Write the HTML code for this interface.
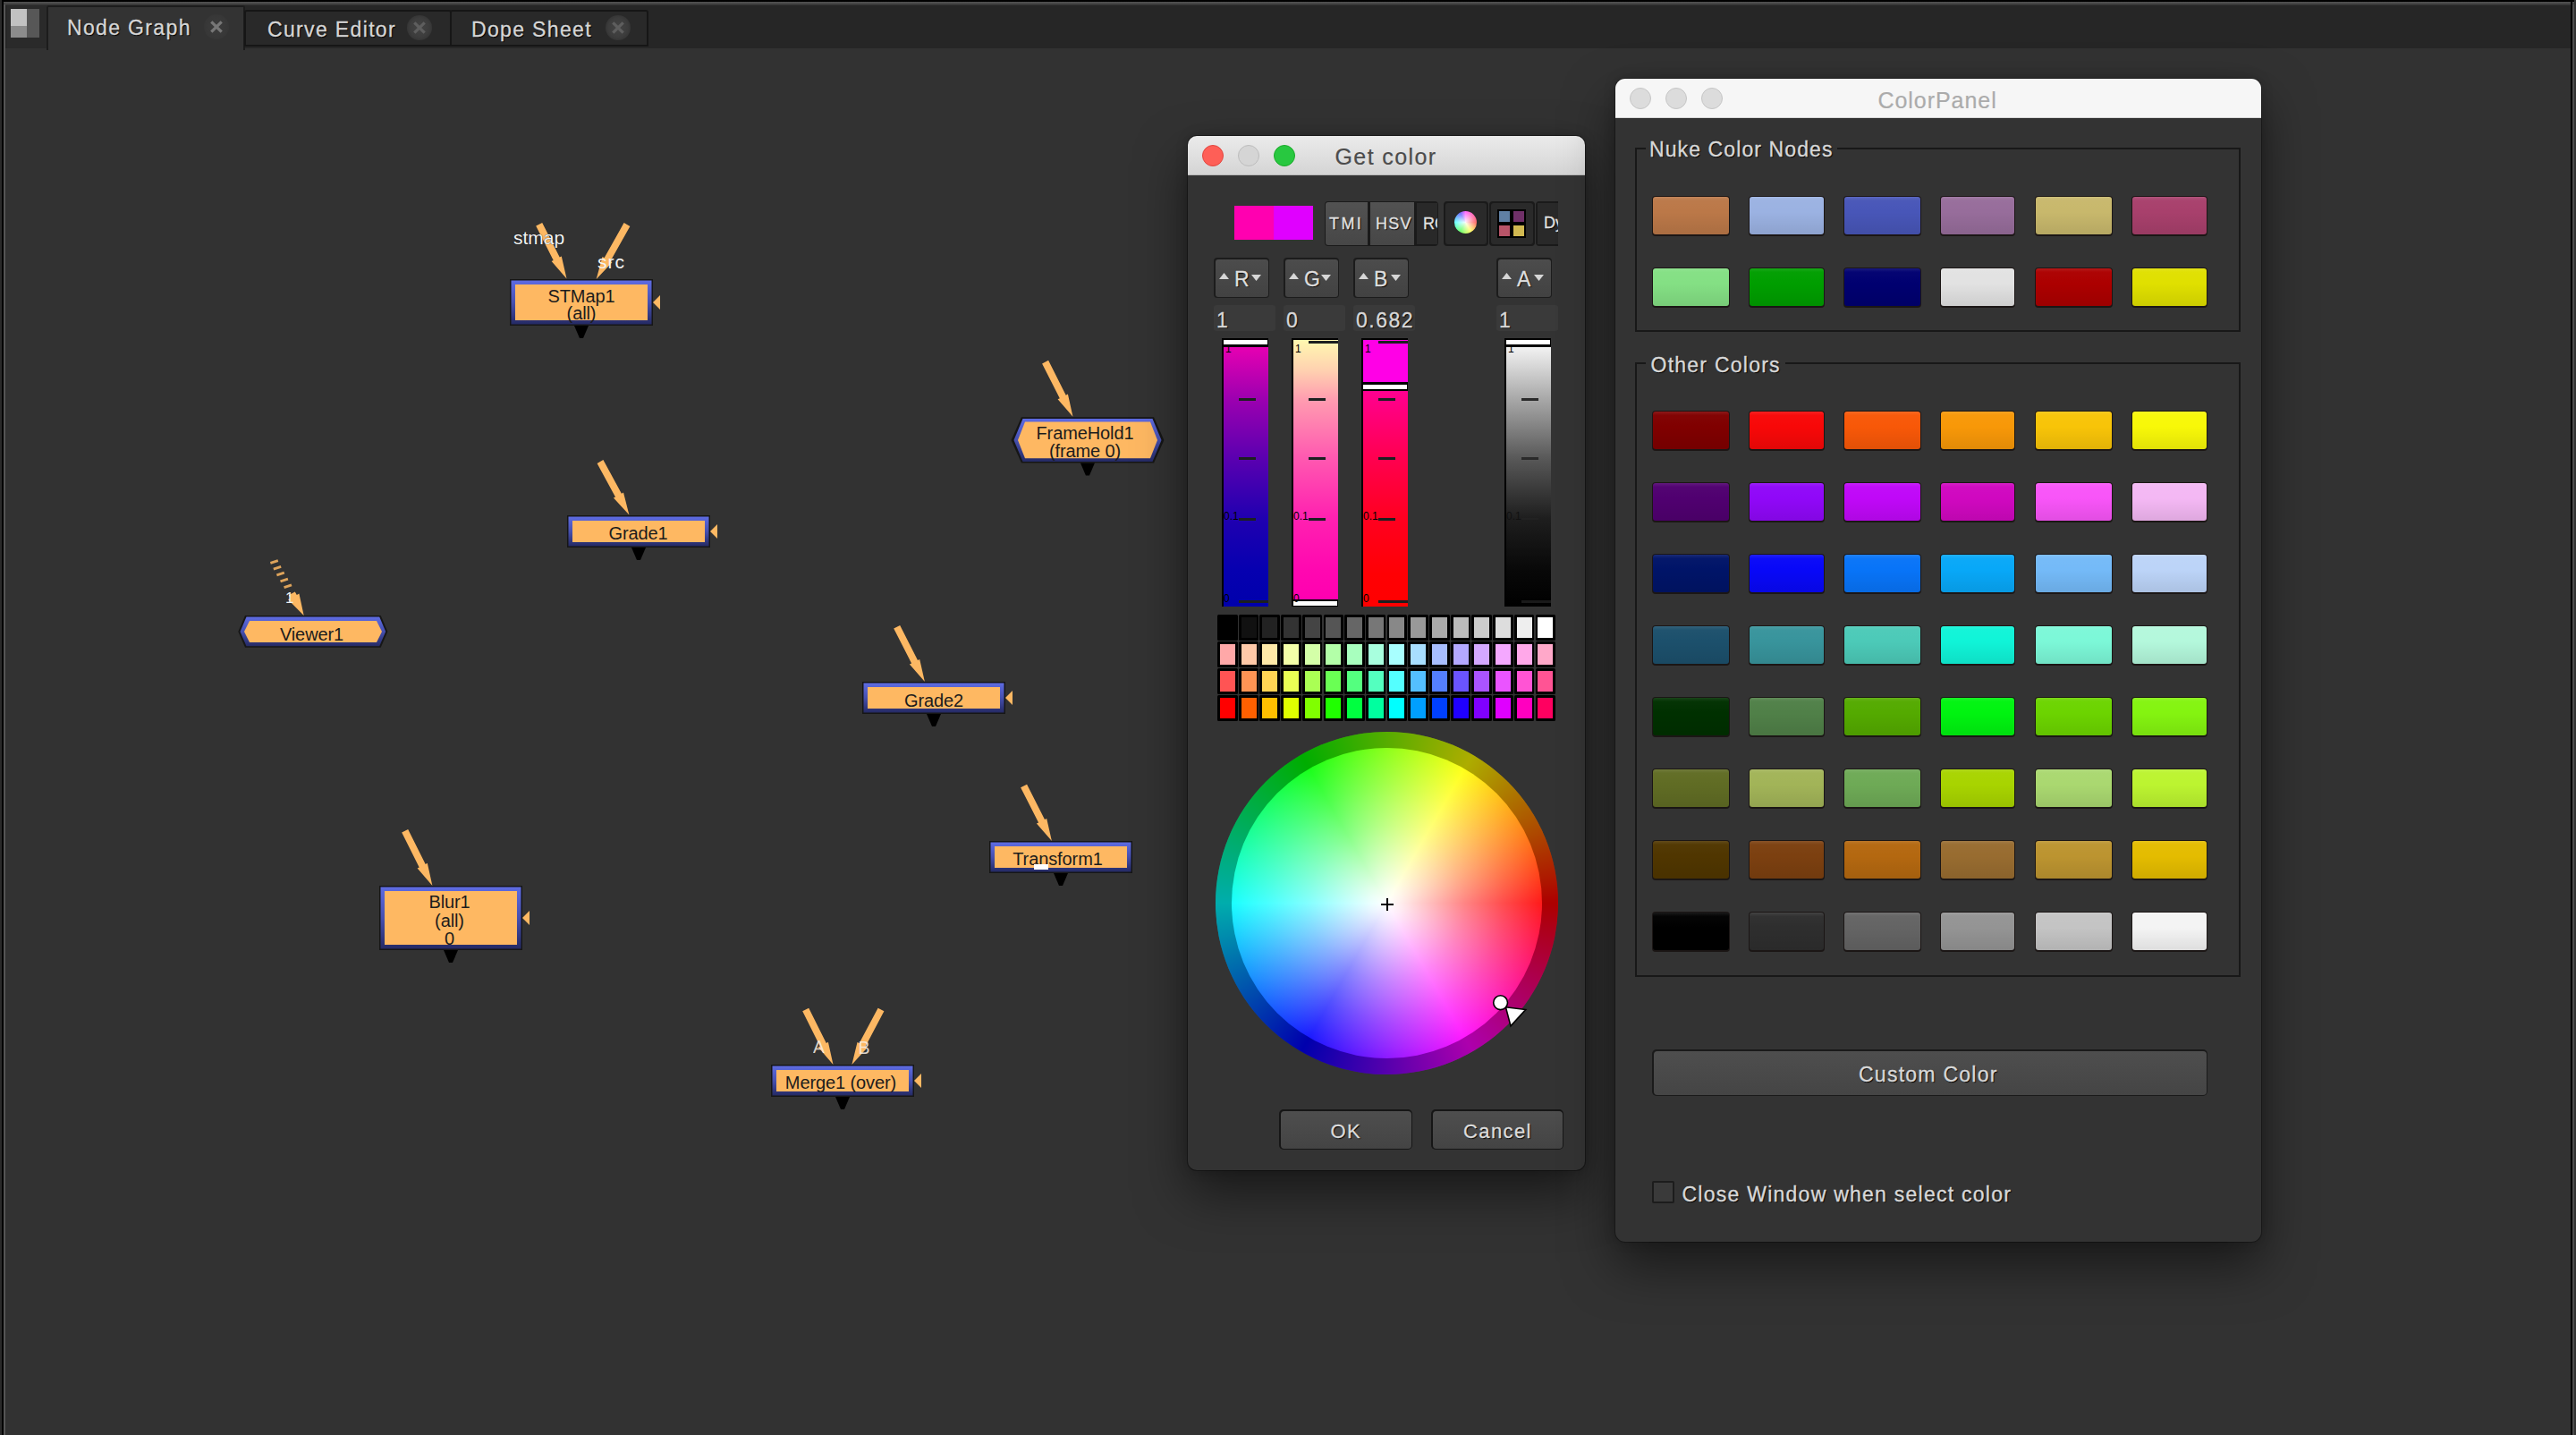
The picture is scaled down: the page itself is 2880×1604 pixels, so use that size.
<!DOCTYPE html>
<html><head><meta charset="utf-8">
<style>
html,body{margin:0;padding:0;}
body{width:2880px;height:1604px;position:relative;overflow:hidden;background:#323232;font-family:"Liberation Sans",sans-serif;}
.a{position:absolute;}
.tabtxt{position:absolute;color:#d6d6d6;font-size:23px;letter-spacing:1.35px;-webkit-text-stroke:0.3px #d6d6d6;text-shadow:1px 1px 1px #000;white-space:nowrap;}
.xbtn{position:absolute;width:28px;height:28px;border-radius:14px;background:radial-gradient(circle,#444 0%,#3c3c3c 55%,rgba(50,50,50,0) 100%);}
.xbtn svg{position:absolute;left:0;top:0;}
</style></head><body>
<!-- frame -->
<div class="a" style="left:0;top:0;width:2880px;height:2px;background:#000"></div>
<div class="a" style="left:0;top:2px;width:2880px;height:3px;background:linear-gradient(#545454,#3e3e3e)"></div>
<div class="a" style="left:0;top:5px;width:2880px;height:1px;background:#333"></div>
<div class="a" style="left:0;top:6px;width:2880px;height:48px;background:#262626"></div>
<div class="a" style="left:0;top:0;width:2px;height:1604px;background:#2a2a2a"></div>
<div class="a" style="left:2px;top:0;width:2px;height:1604px;background:#000"></div>
<div class="a" style="left:4px;top:5px;width:2px;height:1599px;background:#555"></div>
<div class="a" style="left:2874px;top:0;width:2px;height:1604px;background:#000"></div>
<div class="a" style="left:2876px;top:5px;width:2px;height:1599px;background:#4e4e4e"></div>
<div class="a" style="left:2878px;top:0;width:2px;height:1604px;background:#333"></div>

<!-- tab bar -->
<div class="a" style="left:8px;top:6px;width:45px;height:48px;background:#2a2a2a"></div>
<div class="a" style="left:12px;top:10px;width:18px;height:19px;background:#c2c2c2"></div>
<div class="a" style="left:12px;top:29px;width:18px;height:13px;background:#8c8c8c"></div>
<div class="a" style="left:30px;top:10px;width:14px;height:32px;background:#575757"></div>

<!-- Node Graph tab (active) -->
<div class="a" style="left:52px;top:6px;width:222px;height:50px;background:#333;border-left:2px solid #1c1c1c;border-top:2px solid #1c1c1c;border-right:2px solid #1c1c1c;border-radius:3px 3px 0 0;box-sizing:border-box"></div>
<div class="a" style="left:54px;top:8px;width:218px;height:48px;background:#333"></div>
<div class="tabtxt" style="left:75px;top:18px;">Node Graph</div>
<div class="xbtn" style="left:228px;top:16px;background:radial-gradient(circle,#3c3c3c 0%,#383838 55%,rgba(51,51,51,0) 100%);"><svg width="28" height="28"><path d="M8.3 8.3 L19.7 19.7 M19.7 8.3 L8.3 19.7" stroke="#777" stroke-width="3.2"/></svg></div>

<!-- Curve Editor tab -->
<div class="a" style="left:273px;top:11px;width:232px;height:41px;background:#292929;border:2px solid #161616;box-sizing:border-box;border-radius:3px 3px 0 0"></div>
<div class="tabtxt" style="left:299px;top:20px;">Curve Editor</div>
<div class="xbtn" style="left:455px;top:17px;"><svg width="28" height="28"><path d="M8.3 8.3 L19.7 19.7 M19.7 8.3 L8.3 19.7" stroke="#5e5e5e" stroke-width="3.2"/></svg></div>
<!-- Dope Sheet tab -->
<div class="a" style="left:503px;top:11px;width:222px;height:41px;background:#292929;border:2px solid #161616;box-sizing:border-box;border-radius:3px 3px 0 0"></div>
<div class="tabtxt" style="left:527px;top:20px;">Dope Sheet</div>
<div class="xbtn" style="left:677px;top:17px;"><svg width="28" height="28"><path d="M8.3 8.3 L19.7 19.7 M19.7 8.3 L8.3 19.7" stroke="#5e5e5e" stroke-width="3.2"/></svg></div>

<!--NODEGRAPH-->
<svg class="a" style="left:0;top:0" width="2880" height="1604" viewBox="0 0 2880 1604" font-family="Liberation Sans, sans-serif">
<defs><linearGradient id="nb" x1="0" y1="0" x2="0" y2="1"><stop offset="0" stop-color="#5e6be2"/><stop offset="0.5" stop-color="#4650b0"/><stop offset="1" stop-color="#252a64"/></linearGradient></defs>
<polygon points="599.2,252.5 618.7,291.1 616.6,292.1 633.5,311.6 627.8,286.4 625.7,287.5 606.2,248.9" fill="#fdb863"/>
<polygon points="697.6,249.1 675.6,288.3 673.5,287.1 666.7,312.0 684.4,293.3 682.4,292.1 704.4,252.9" fill="#fdb863"/>
<polygon points="1165.1,406.4 1184.8,445.2 1182.6,446.3 1199.5,465.8 1193.9,440.6 1191.7,441.7 1172.1,402.8" fill="#fdb863"/>
<polygon points="667.6,517.9 688.0,555.5 685.9,556.6 703.4,575.6 697.0,550.6 694.9,551.8 674.4,514.1" fill="#fdb863"/>
<polygon points="999.2,702.5 1019.1,741.5 1016.9,742.6 1033.9,762.0 1028.2,736.9 1026.0,738.0 1006.2,698.9" fill="#fdb863"/>
<polygon points="1141.1,880.3 1161.1,919.5 1158.9,920.6 1175.9,940.0 1170.2,914.9 1168.0,916.0 1148.1,876.7" fill="#fdb863"/>
<polygon points="449.2,930.5 468.7,969.4 466.6,970.5 483.4,990.0 477.8,964.8 475.7,965.9 456.2,927.1" fill="#fdb863"/>
<polygon points="897.2,1130.2 916.8,1169.4 914.7,1170.5 931.5,1190.0 925.9,1164.8 923.8,1165.9 904.2,1126.8" fill="#fdb863"/>
<polygon points="981.6,1126.7 960.7,1166.1 958.5,1165.0 952.4,1190.0 969.7,1170.9 967.6,1169.7 988.4,1130.3" fill="#fdb863"/>
<line x1="302.4" y1="629.4" x2="310.8" y2="626.6" stroke="#fdb863" stroke-width="2.8" opacity="0.85"/>
<line x1="305.8" y1="636.1" x2="314.2" y2="633.3" stroke="#fdb863" stroke-width="2.8" opacity="0.85"/>
<line x1="309.4" y1="642.9" x2="317.8" y2="640.1" stroke="#fdb863" stroke-width="2.8" opacity="0.85"/>
<line x1="313.5" y1="649.9" x2="321.9" y2="647.1" stroke="#fdb863" stroke-width="2.8" opacity="0.85"/>
<line x1="317.6" y1="656.7" x2="326.0" y2="653.9" stroke="#fdb863" stroke-width="2.8" opacity="0.85"/>
<polygon points="322.8,665.3 324.7,668.8 322.1,670.3 339.7,688.0 334.4,663.6 331.8,665.0 329.8,661.5" fill="#fdb863"/>
<rect x="570" y="312" width="160" height="52" fill="#161616"/>
<rect x="571.5" y="313.5" width="157" height="49" fill="url(#nb)"/>
<rect x="576" y="318" width="148" height="40" fill="#feb862"/>
<text x="650" y="338" font-size="20" letter-spacing="-0.1" text-anchor="middle" fill="#1c1c1c">STMap1</text>
<text x="650" y="357" font-size="20" letter-spacing="-0.1" text-anchor="middle" fill="#1c1c1c">(all)</text>
<polygon points="642.0,364 658.0,364 652.0,378 648.0,378" fill="#000"/>
<polygon points="730,338.0 738,330.0 738,346.0" fill="#fdb863"/>
<rect x="634" y="576" width="160" height="36" fill="#161616"/>
<rect x="635.5" y="577.5" width="157" height="33" fill="url(#nb)"/>
<rect x="640" y="582" width="148" height="24" fill="#feb862"/>
<text x="713.5" y="603.4" font-size="20" letter-spacing="-0.1" text-anchor="middle" fill="#1c1c1c">Grade1</text>
<polygon points="706.0,612 722.0,612 716.0,626 712.0,626" fill="#000"/>
<polygon points="794,594.0 802,586.0 802,602.0" fill="#fdb863"/>
<rect x="964" y="762" width="160" height="36" fill="#161616"/>
<rect x="965.5" y="763.5" width="157" height="33" fill="url(#nb)"/>
<rect x="970" y="768" width="148" height="24" fill="#feb862"/>
<text x="1044" y="789.5" font-size="20" letter-spacing="-0.1" text-anchor="middle" fill="#1c1c1c">Grade2</text>
<polygon points="1036.0,798 1052.0,798 1046.0,812 1042.0,812" fill="#000"/>
<polygon points="1124,780.0 1132,772.0 1132,788.0" fill="#fdb863"/>
<rect x="1106" y="940" width="160" height="36" fill="#161616"/>
<rect x="1107.5" y="941.5" width="157" height="33" fill="url(#nb)"/>
<rect x="1112" y="946" width="148" height="24" fill="#feb862"/>
<text x="1182.5" y="967.3" font-size="20" letter-spacing="-0.1" text-anchor="middle" fill="#1c1c1c">Transform1</text>
<polygon points="1178.0,976 1194.0,976 1188.0,990 1184.0,990" fill="#000"/>
<rect x="424" y="990" width="160" height="72" fill="#161616"/>
<rect x="425.5" y="991.5" width="157" height="69" fill="url(#nb)"/>
<rect x="430" y="996" width="148" height="60" fill="#feb862"/>
<text x="502.5" y="1015.4" font-size="20" letter-spacing="-0.1" text-anchor="middle" fill="#1c1c1c">Blur1</text>
<text x="502.5" y="1035.5" font-size="20" letter-spacing="-0.1" text-anchor="middle" fill="#1c1c1c">(all)</text>
<text x="502.5" y="1055.5" font-size="20" letter-spacing="-0.1" text-anchor="middle" fill="#1c1c1c">0</text>
<polygon points="496.0,1062 512.0,1062 506.0,1076 502.0,1076" fill="#000"/>
<polygon points="584,1026.0 592,1018.0 592,1034.0" fill="#fdb863"/>
<rect x="862" y="1190" width="160" height="36" fill="#161616"/>
<rect x="863.5" y="1191.5" width="157" height="33" fill="url(#nb)"/>
<rect x="868" y="1196" width="148" height="24" fill="#feb862"/>
<text x="940" y="1217.3" font-size="20" letter-spacing="-0.1" text-anchor="middle" fill="#1c1c1c">Merge1 (over)</text>
<polygon points="934.0,1226 950.0,1226 944.0,1240 940.0,1240" fill="#000"/>
<polygon points="1022,1208.0 1030,1200.0 1030,1216.0" fill="#fdb863"/>
<polygon points="1130.5,492 1142,466.3 1290,466.3 1301.4,492 1290,517.5 1142,517.5" fill="#161616"/>
<polygon points="1133.5,492 1143.5,468 1288.5,468 1298.5,492 1288.5,516 1143.5,516" fill="url(#nb)"/>
<polygon points="1138,492 1146,471.5 1286,471.5 1294,492 1286,512.3 1146,512.3" fill="#feb862"/>
<text x="1213" y="491.4" font-size="20" letter-spacing="-0.1" text-anchor="middle" fill="#1c1c1c">FrameHold1</text>
<text x="1213" y="511.2" font-size="20" letter-spacing="-0.1" text-anchor="middle" fill="#1c1c1c">(frame 0)</text>
<polygon points="1207.95,517.5 1223.95,517.5 1217.95,531.5 1213.95,531.5" fill="#000"/>
<polygon points="266.3,706 274,688 425.7,688 433.4,706 425.7,723.7 274,723.7" fill="#161616"/>
<polygon points="268.5,706 275.5,689.5 424.2,689.5 431.2,706 424.2,722.2 275.5,722.2" fill="url(#nb)"/>
<polygon points="273,706 279,694 421,694 427,706 421,718 279,718" fill="#feb862"/>
<text x="348.5" y="715.5" font-size="20" letter-spacing="-0.1" text-anchor="middle" fill="#1c1c1c">Viewer1</text>
<rect x="1156" y="966" width="16" height="6" fill="#fff"/>
<text x="574" y="273.3" font-size="21" fill="#f4f4f4" style="text-shadow:0 0 1px #000">stmap</text>
<text x="668" y="299.7" font-size="21" fill="#f4f4f4" letter-spacing="1">src</text>
<text x="909" y="1176.5" font-size="19.5" fill="#f8eee4" opacity="0.85">A</text>
<text x="959.5" y="1178" font-size="19.5" fill="#f8eee4" opacity="0.85">B</text>
<text x="319" y="674" font-size="17" fill="#f0f0f0">1</text>
</svg>
<!--/NODEGRAPH-->

<!--GETCOLOR-->
<div class="a" style="left:1328px;top:152px;width:444px;height:1156px;border-radius:10px;box-shadow:0 0 0 1px rgba(0,0,0,0.35),0 26px 56px rgba(0,0,0,0.5),0 0 14px rgba(0,0,0,0.2);background:#333;"></div>
<div class="a" style="left:1328px;top:152px;width:444px;height:44px;border-radius:10px 10px 0 0;background:linear-gradient(#ebebeb,#d4d4d4);box-shadow:inset 0 -1px 0 #b8b8b8;"></div>
<div class="a" style="left:1344px;top:162px;width:22px;height:22px;border-radius:50%;background:#fe5f57;border:1px solid #e2463f;"></div>
<div class="a" style="left:1384px;top:162px;width:22px;height:22px;border-radius:50%;background:#d5d5d5;border:1px solid #bdbdbd;"></div>
<div class="a" style="left:1424px;top:162px;width:22px;height:22px;border-radius:50%;background:#28c840;border:1px solid #1aab29;"></div>
<div class="a" style="left:1492.5px;top:161px;font-size:25px;color:#4c4c4c;letter-spacing:1.4px;white-space:nowrap;-webkit-text-stroke:0.2px #4c4c4c">Get color</div>
<div class="a" style="left:1380px;top:230px;width:44px;height:38px;background:#ff00b0"></div>
<div class="a" style="left:1424px;top:230px;width:44px;height:38px;background:#e000ff"></div>
<div class="a" style="left:1481px;top:225px;width:127px;height:50px;background:#1a1a1a;border-radius:4px"></div>
<div class="a" style="left:1482px;top:226px;width:47px;height:48px;background:linear-gradient(#525252,#474747);border-radius:3px 0 0 3px"></div>
<div class="a" style="left:1532px;top:226px;width:49px;height:48px;background:linear-gradient(#525252,#474747)"></div>
<div class="a" style="left:1584px;top:227px;width:23px;height:46px;background:#292929;overflow:hidden"><div class="a" style="left:7px;top:13px;color:#e2e2e2;text-shadow:1px 1px 1px #000;font-size:18px;white-space:nowrap;-webkit-text-stroke:0.3px #e2e2e2;">RG</div></div>
<div class="a" style="left:1486px;top:240px;color:#e2e2e2;text-shadow:1px 1px 1px #000;font-size:18px;white-space:nowrap;-webkit-text-stroke:0.3px #e2e2e2;letter-spacing:2.4px">TMI</div>
<div class="a" style="left:1538px;top:240px;color:#e2e2e2;text-shadow:1px 1px 1px #000;font-size:18px;white-space:nowrap;-webkit-text-stroke:0.3px #e2e2e2;letter-spacing:1.3px">HSV</div>
<div class="a" style="left:1614px;top:225px;width:50px;height:50px;background:#1a1a1a;border-radius:4px"></div>
<div class="a" style="left:1616px;top:227px;width:46px;height:46px;background:#2a2a2a;border-radius:3px"></div>
<div class="a" style="left:1626px;top:236px;width:25px;height:25px;border-radius:50%;background:radial-gradient(circle,rgba(255,255,255,0.95) 0%,rgba(255,255,255,0.55) 50%,rgba(255,255,255,0.2) 100%),conic-gradient(from 0deg,#ff00ff,#ff0000 90deg,#ffff00 150deg,#00ff00 210deg,#00ffff 270deg,#0000ff 330deg,#ff00ff)"></div>
<div class="a" style="left:1665px;top:225px;width:51px;height:50px;background:#1a1a1a;border-radius:4px"></div>
<div class="a" style="left:1667px;top:227px;width:47px;height:46px;background:#2a2a2a;border-radius:3px"></div>
<div class="a" style="left:1674px;top:234px;width:32px;height:32px;background:#000"></div>
<div class="a" style="left:1676px;top:236px;width:12px;height:12px;background:#6080a4"></div>
<div class="a" style="left:1692px;top:236px;width:12px;height:12px;background:#703068"></div>
<div class="a" style="left:1676px;top:252px;width:12px;height:12px;background:#b85468"></div>
<div class="a" style="left:1692px;top:252px;width:12px;height:12px;background:#d0b850"></div>
<div class="a" style="left:1717px;top:225px;width:25px;height:50px;background:#1a1a1a;border-radius:4px 0 0 4px"></div>
<div class="a" style="left:1719px;top:227px;width:23px;height:46px;background:#292929;overflow:hidden"><div class="a" style="left:7px;top:12px;color:#e2e2e2;text-shadow:1px 1px 1px #000;font-size:18px;white-space:nowrap;-webkit-text-stroke:0.3px #e2e2e2;">Dy</div></div>
<div class="a" style="left:1357px;top:288px;width:62px;height:45px;background:#1c1c1c;border-radius:4px"></div>
<div class="a" style="left:1358.5px;top:289.5px;width:59px;height:42px;background:linear-gradient(#4c4c4c,#424242);border-radius:3px"></div>
<svg class="a" style="left:1363px;top:305px" width="12" height="9"><polygon points="5.5,0 11,7 0,7" fill="#d6d6d6"/></svg>
<svg class="a" style="left:1399px;top:307px" width="12" height="9"><polygon points="0,0 11,0 5.5,7" fill="#d6d6d6"/></svg>
<div class="a" style="left:1380px;top:299px;color:#dedede;font-size:23px;-webkit-text-stroke:0.3px #dedede;text-shadow:1px 1px 1px #000">R</div>
<div class="a" style="left:1435px;top:288px;width:62px;height:45px;background:#1c1c1c;border-radius:4px"></div>
<div class="a" style="left:1436.5px;top:289.5px;width:59px;height:42px;background:linear-gradient(#4c4c4c,#424242);border-radius:3px"></div>
<svg class="a" style="left:1441px;top:305px" width="12" height="9"><polygon points="5.5,0 11,7 0,7" fill="#d6d6d6"/></svg>
<svg class="a" style="left:1477px;top:307px" width="12" height="9"><polygon points="0,0 11,0 5.5,7" fill="#d6d6d6"/></svg>
<div class="a" style="left:1458px;top:299px;color:#dedede;font-size:23px;-webkit-text-stroke:0.3px #dedede;text-shadow:1px 1px 1px #000">G</div>
<div class="a" style="left:1513px;top:288px;width:62px;height:45px;background:#1c1c1c;border-radius:4px"></div>
<div class="a" style="left:1514.5px;top:289.5px;width:59px;height:42px;background:linear-gradient(#4c4c4c,#424242);border-radius:3px"></div>
<svg class="a" style="left:1519px;top:305px" width="12" height="9"><polygon points="5.5,0 11,7 0,7" fill="#d6d6d6"/></svg>
<svg class="a" style="left:1555px;top:307px" width="12" height="9"><polygon points="0,0 11,0 5.5,7" fill="#d6d6d6"/></svg>
<div class="a" style="left:1536px;top:299px;color:#dedede;font-size:23px;-webkit-text-stroke:0.3px #dedede;text-shadow:1px 1px 1px #000">B</div>
<div class="a" style="left:1673px;top:288px;width:62px;height:45px;background:#1c1c1c;border-radius:4px"></div>
<div class="a" style="left:1674.5px;top:289.5px;width:59px;height:42px;background:linear-gradient(#4c4c4c,#424242);border-radius:3px"></div>
<svg class="a" style="left:1679px;top:305px" width="12" height="9"><polygon points="5.5,0 11,7 0,7" fill="#d6d6d6"/></svg>
<svg class="a" style="left:1715px;top:307px" width="12" height="9"><polygon points="0,0 11,0 5.5,7" fill="#d6d6d6"/></svg>
<div class="a" style="left:1696px;top:299px;color:#dedede;font-size:23px;-webkit-text-stroke:0.3px #dedede;text-shadow:1px 1px 1px #000">A</div>
<div class="a" style="left:1357px;top:341px;width:69px;height:29px;background:#3a3a3a;border-radius:3px"></div>
<div class="a" style="left:1360px;top:345px;color:#d8d8d8;font-size:23px;letter-spacing:1.5px;-webkit-text-stroke:0.3px #d8d8d8;text-shadow:1px 1px 1px #000;white-space:nowrap">1</div>
<div class="a" style="left:1435px;top:341px;width:69px;height:29px;background:#3a3a3a;border-radius:3px"></div>
<div class="a" style="left:1438px;top:345px;color:#d8d8d8;font-size:23px;letter-spacing:1.5px;-webkit-text-stroke:0.3px #d8d8d8;text-shadow:1px 1px 1px #000;white-space:nowrap">0</div>
<div class="a" style="left:1513px;top:341px;width:69px;height:29px;background:#3a3a3a;border-radius:3px"></div>
<div class="a" style="left:1516px;top:345px;color:#d8d8d8;font-size:23px;letter-spacing:1.5px;-webkit-text-stroke:0.3px #d8d8d8;text-shadow:1px 1px 1px #000;white-space:nowrap">0.682</div>
<div class="a" style="left:1673px;top:341px;width:69px;height:29px;background:#3a3a3a;border-radius:3px"></div>
<div class="a" style="left:1676px;top:345px;color:#d8d8d8;font-size:23px;letter-spacing:1.5px;-webkit-text-stroke:0.3px #d8d8d8;text-shadow:1px 1px 1px #000;white-space:nowrap">1</div>
<div class="a" style="left:1366px;top:378px;width:52px;height:300px;background:#000"></div>
<div class="a" style="left:1368px;top:380px;width:49px;height:5px;background:#fff"></div>
<div class="a" style="left:1368px;top:388px;width:50px;height:290px;background:linear-gradient(#e600b2 0%,#9c00b0 20%,#5a00b0 43%,#2000b0 66%,#0600b0 86%,#0000ac 100%)"></div>
<div class="a" style="left:1385px;top:445px;width:19px;height:3px;background:#1c2020"></div><div class="a" style="left:1385px;top:511px;width:19px;height:3px;background:#1c2020"></div><div class="a" style="left:1385px;top:579px;width:19px;height:3px;background:#1c2020"></div>
<div class="a" style="left:1385px;top:671px;width:33px;height:3px;background:#1c2020"></div>
<div class="a" style="left:1370px;top:383px;font-size:12px;color:#000;white-space:nowrap;">1</div><div class="a" style="left:1368px;top:570px;font-size:12px;color:#000;white-space:nowrap;">0.1</div><div class="a" style="left:1368px;top:662px;font-size:12px;color:#000;white-space:nowrap;">0</div>
<div class="a" style="left:1444px;top:378px;width:52px;height:300px;background:#000"></div>
<div class="a" style="left:1446px;top:380px;width:50px;height:290px;background:linear-gradient(#fff8b0 0%,#ffd0b0 12%,#ff9cb0 23%,#ff5ab0 45%,#ff22b0 68%,#ff08b0 88%,#ff00b0 100%)"></div>
<div class="a" style="left:1463px;top:381px;width:33px;height:3px;background:#1c2020"></div>
<div class="a" style="left:1446px;top:672px;width:49px;height:5px;background:#fff"></div>
<div class="a" style="left:1463px;top:445px;width:19px;height:3px;background:#1c2020"></div><div class="a" style="left:1463px;top:511px;width:19px;height:3px;background:#1c2020"></div><div class="a" style="left:1463px;top:579px;width:19px;height:3px;background:#1c2020"></div>
<div class="a" style="left:1448px;top:383px;font-size:12px;color:#000;white-space:nowrap;">1</div><div class="a" style="left:1446px;top:570px;font-size:12px;color:#000;white-space:nowrap;">0.1</div><div class="a" style="left:1446px;top:662px;font-size:12px;color:#000;white-space:nowrap;">0</div>
<div class="a" style="left:1522px;top:378px;width:52px;height:300px;background:#000"></div>
<div class="a" style="left:1524px;top:380px;width:50px;height:47px;background:#ff00e6"></div>
<div class="a" style="left:1524px;top:430px;width:49px;height:5px;background:#fff"></div>
<div class="a" style="left:1524px;top:437px;width:50px;height:241px;background:linear-gradient(#ff0090 0%,#ff0088 4%,#ff0050 31%,#ff0020 59%,#ff0004 85%,#ff0000 100%)"></div>
<div class="a" style="left:1541px;top:381px;width:33px;height:3px;background:#1c2020"></div>
<div class="a" style="left:1541px;top:445px;width:19px;height:3px;background:#1c2020"></div><div class="a" style="left:1541px;top:511px;width:19px;height:3px;background:#1c2020"></div><div class="a" style="left:1541px;top:579px;width:19px;height:3px;background:#1c2020"></div>
<div class="a" style="left:1541px;top:671px;width:33px;height:3px;background:#1c2020"></div>
<div class="a" style="left:1526px;top:383px;font-size:12px;color:#000;white-space:nowrap;">1</div><div class="a" style="left:1524px;top:570px;font-size:12px;color:#000;white-space:nowrap;">0.1</div><div class="a" style="left:1524px;top:662px;font-size:12px;color:#000;white-space:nowrap;">0</div>
<div class="a" style="left:1682px;top:378px;width:52px;height:300px;background:#000"></div>
<div class="a" style="left:1684px;top:380px;width:49px;height:5px;background:#fff"></div>
<div class="a" style="left:1684px;top:388px;width:50px;height:290px;background:linear-gradient(#f2f2f2 0%,#a8a8a8 20%,#585858 43%,#1e1e1e 66%,#080808 86%,#000 100%)"></div>
<div class="a" style="left:1701px;top:445px;width:19px;height:3px;background:#2a2a2a"></div>
<div class="a" style="left:1701px;top:511px;width:19px;height:3px;background:#2a2a2a"></div>
<div class="a" style="left:1701px;top:579px;width:19px;height:2px;background:#222"></div>
<div class="a" style="left:1701px;top:671px;width:33px;height:3px;background:#1a1a1a"></div>
<div class="a" style="left:1686px;top:383px;font-size:12px;color:#000;white-space:nowrap;">1</div>
<div class="a" style="left:1684px;top:570px;font-size:12px;color:#000;white-space:nowrap;color:#111">0.1</div>
<div class="a" style="left:1361.0px;top:687.0px;width:22.5px;height:29px;background:#000;border-radius:1.5px"></div>
<div class="a" style="left:1363.8px;top:689.9px;width:17px;height:23px;background:#000000"></div>
<div class="a" style="left:1384.7px;top:687.0px;width:22.5px;height:29px;background:#000;border-radius:1.5px"></div>
<div class="a" style="left:1387.5px;top:689.9px;width:17px;height:23px;background:#111111"></div>
<div class="a" style="left:1408.4px;top:687.0px;width:22.5px;height:29px;background:#000;border-radius:1.5px"></div>
<div class="a" style="left:1411.2px;top:689.9px;width:17px;height:23px;background:#222222"></div>
<div class="a" style="left:1432.1px;top:687.0px;width:22.5px;height:29px;background:#000;border-radius:1.5px"></div>
<div class="a" style="left:1434.9px;top:689.9px;width:17px;height:23px;background:#333333"></div>
<div class="a" style="left:1455.8px;top:687.0px;width:22.5px;height:29px;background:#000;border-radius:1.5px"></div>
<div class="a" style="left:1458.6px;top:689.9px;width:17px;height:23px;background:#444444"></div>
<div class="a" style="left:1479.5px;top:687.0px;width:22.5px;height:29px;background:#000;border-radius:1.5px"></div>
<div class="a" style="left:1482.3px;top:689.9px;width:17px;height:23px;background:#555555"></div>
<div class="a" style="left:1503.2px;top:687.0px;width:22.5px;height:29px;background:#000;border-radius:1.5px"></div>
<div class="a" style="left:1506.0px;top:689.9px;width:17px;height:23px;background:#666666"></div>
<div class="a" style="left:1526.9px;top:687.0px;width:22.5px;height:29px;background:#000;border-radius:1.5px"></div>
<div class="a" style="left:1529.7px;top:689.9px;width:17px;height:23px;background:#777777"></div>
<div class="a" style="left:1550.6px;top:687.0px;width:22.5px;height:29px;background:#000;border-radius:1.5px"></div>
<div class="a" style="left:1553.4px;top:689.9px;width:17px;height:23px;background:#888888"></div>
<div class="a" style="left:1574.3px;top:687.0px;width:22.5px;height:29px;background:#000;border-radius:1.5px"></div>
<div class="a" style="left:1577.1px;top:689.9px;width:17px;height:23px;background:#999999"></div>
<div class="a" style="left:1598.0px;top:687.0px;width:22.5px;height:29px;background:#000;border-radius:1.5px"></div>
<div class="a" style="left:1600.8px;top:689.9px;width:17px;height:23px;background:#aaaaaa"></div>
<div class="a" style="left:1621.7px;top:687.0px;width:22.5px;height:29px;background:#000;border-radius:1.5px"></div>
<div class="a" style="left:1624.5px;top:689.9px;width:17px;height:23px;background:#bbbbbb"></div>
<div class="a" style="left:1645.4px;top:687.0px;width:22.5px;height:29px;background:#000;border-radius:1.5px"></div>
<div class="a" style="left:1648.2px;top:689.9px;width:17px;height:23px;background:#cccccc"></div>
<div class="a" style="left:1669.1px;top:687.0px;width:22.5px;height:29px;background:#000;border-radius:1.5px"></div>
<div class="a" style="left:1671.9px;top:689.9px;width:17px;height:23px;background:#dddddd"></div>
<div class="a" style="left:1692.8px;top:687.0px;width:22.5px;height:29px;background:#000;border-radius:1.5px"></div>
<div class="a" style="left:1695.6px;top:689.9px;width:17px;height:23px;background:#eeeeee"></div>
<div class="a" style="left:1716.5px;top:687.0px;width:22.5px;height:29px;background:#000;border-radius:1.5px"></div>
<div class="a" style="left:1719.3px;top:689.9px;width:17px;height:23px;background:#ffffff"></div>
<div class="a" style="left:1361.0px;top:716.9px;width:22.5px;height:29px;background:#000;border-radius:1.5px"></div>
<div class="a" style="left:1363.8px;top:719.8px;width:17px;height:23px;background:#ffa8a8"></div>
<div class="a" style="left:1384.7px;top:716.9px;width:22.5px;height:29px;background:#000;border-radius:1.5px"></div>
<div class="a" style="left:1387.5px;top:719.8px;width:17px;height:23px;background:#ffc9a8"></div>
<div class="a" style="left:1408.4px;top:716.9px;width:22.5px;height:29px;background:#000;border-radius:1.5px"></div>
<div class="a" style="left:1411.2px;top:719.8px;width:17px;height:23px;background:#ffe9a8"></div>
<div class="a" style="left:1432.1px;top:716.9px;width:22.5px;height:29px;background:#000;border-radius:1.5px"></div>
<div class="a" style="left:1434.9px;top:719.8px;width:17px;height:23px;background:#f4ffa8"></div>
<div class="a" style="left:1455.8px;top:716.9px;width:22.5px;height:29px;background:#000;border-radius:1.5px"></div>
<div class="a" style="left:1458.6px;top:719.8px;width:17px;height:23px;background:#d4ffa8"></div>
<div class="a" style="left:1479.5px;top:716.9px;width:22.5px;height:29px;background:#000;border-radius:1.5px"></div>
<div class="a" style="left:1482.3px;top:719.8px;width:17px;height:23px;background:#b3ffa8"></div>
<div class="a" style="left:1503.2px;top:716.9px;width:22.5px;height:29px;background:#000;border-radius:1.5px"></div>
<div class="a" style="left:1506.0px;top:719.8px;width:17px;height:23px;background:#a8ffbe"></div>
<div class="a" style="left:1526.9px;top:716.9px;width:22.5px;height:29px;background:#000;border-radius:1.5px"></div>
<div class="a" style="left:1529.7px;top:719.8px;width:17px;height:23px;background:#a8ffde"></div>
<div class="a" style="left:1550.6px;top:716.9px;width:22.5px;height:29px;background:#000;border-radius:1.5px"></div>
<div class="a" style="left:1553.4px;top:719.8px;width:17px;height:23px;background:#a8ffff"></div>
<div class="a" style="left:1574.3px;top:716.9px;width:22.5px;height:29px;background:#000;border-radius:1.5px"></div>
<div class="a" style="left:1577.1px;top:719.8px;width:17px;height:23px;background:#a8deff"></div>
<div class="a" style="left:1598.0px;top:716.9px;width:22.5px;height:29px;background:#000;border-radius:1.5px"></div>
<div class="a" style="left:1600.8px;top:719.8px;width:17px;height:23px;background:#a8beff"></div>
<div class="a" style="left:1621.7px;top:716.9px;width:22.5px;height:29px;background:#000;border-radius:1.5px"></div>
<div class="a" style="left:1624.5px;top:719.8px;width:17px;height:23px;background:#b3a8ff"></div>
<div class="a" style="left:1645.4px;top:716.9px;width:22.5px;height:29px;background:#000;border-radius:1.5px"></div>
<div class="a" style="left:1648.2px;top:719.8px;width:17px;height:23px;background:#d4a8ff"></div>
<div class="a" style="left:1669.1px;top:716.9px;width:22.5px;height:29px;background:#000;border-radius:1.5px"></div>
<div class="a" style="left:1671.9px;top:719.8px;width:17px;height:23px;background:#f4a8ff"></div>
<div class="a" style="left:1692.8px;top:716.9px;width:22.5px;height:29px;background:#000;border-radius:1.5px"></div>
<div class="a" style="left:1695.6px;top:719.8px;width:17px;height:23px;background:#ffa8e9"></div>
<div class="a" style="left:1716.5px;top:716.9px;width:22.5px;height:29px;background:#000;border-radius:1.5px"></div>
<div class="a" style="left:1719.3px;top:719.8px;width:17px;height:23px;background:#ffa8c9"></div>
<div class="a" style="left:1361.0px;top:746.8px;width:22.5px;height:29px;background:#000;border-radius:1.5px"></div>
<div class="a" style="left:1363.8px;top:749.7px;width:17px;height:23px;background:#ff5454"></div>
<div class="a" style="left:1384.7px;top:746.8px;width:22.5px;height:29px;background:#000;border-radius:1.5px"></div>
<div class="a" style="left:1387.5px;top:749.7px;width:17px;height:23px;background:#ff9454"></div>
<div class="a" style="left:1408.4px;top:746.8px;width:22.5px;height:29px;background:#000;border-radius:1.5px"></div>
<div class="a" style="left:1411.2px;top:749.7px;width:17px;height:23px;background:#ffd454"></div>
<div class="a" style="left:1432.1px;top:746.8px;width:22.5px;height:29px;background:#000;border-radius:1.5px"></div>
<div class="a" style="left:1434.9px;top:749.7px;width:17px;height:23px;background:#eaff54"></div>
<div class="a" style="left:1455.8px;top:746.8px;width:22.5px;height:29px;background:#000;border-radius:1.5px"></div>
<div class="a" style="left:1458.6px;top:749.7px;width:17px;height:23px;background:#aaff54"></div>
<div class="a" style="left:1479.5px;top:746.8px;width:22.5px;height:29px;background:#000;border-radius:1.5px"></div>
<div class="a" style="left:1482.3px;top:749.7px;width:17px;height:23px;background:#6aff54"></div>
<div class="a" style="left:1503.2px;top:746.8px;width:22.5px;height:29px;background:#000;border-radius:1.5px"></div>
<div class="a" style="left:1506.0px;top:749.7px;width:17px;height:23px;background:#54ff7f"></div>
<div class="a" style="left:1526.9px;top:746.8px;width:22.5px;height:29px;background:#000;border-radius:1.5px"></div>
<div class="a" style="left:1529.7px;top:749.7px;width:17px;height:23px;background:#54ffbf"></div>
<div class="a" style="left:1550.6px;top:746.8px;width:22.5px;height:29px;background:#000;border-radius:1.5px"></div>
<div class="a" style="left:1553.4px;top:749.7px;width:17px;height:23px;background:#54ffff"></div>
<div class="a" style="left:1574.3px;top:746.8px;width:22.5px;height:29px;background:#000;border-radius:1.5px"></div>
<div class="a" style="left:1577.1px;top:749.7px;width:17px;height:23px;background:#54bfff"></div>
<div class="a" style="left:1598.0px;top:746.8px;width:22.5px;height:29px;background:#000;border-radius:1.5px"></div>
<div class="a" style="left:1600.8px;top:749.7px;width:17px;height:23px;background:#547fff"></div>
<div class="a" style="left:1621.7px;top:746.8px;width:22.5px;height:29px;background:#000;border-radius:1.5px"></div>
<div class="a" style="left:1624.5px;top:749.7px;width:17px;height:23px;background:#6a54ff"></div>
<div class="a" style="left:1645.4px;top:746.8px;width:22.5px;height:29px;background:#000;border-radius:1.5px"></div>
<div class="a" style="left:1648.2px;top:749.7px;width:17px;height:23px;background:#aa54ff"></div>
<div class="a" style="left:1669.1px;top:746.8px;width:22.5px;height:29px;background:#000;border-radius:1.5px"></div>
<div class="a" style="left:1671.9px;top:749.7px;width:17px;height:23px;background:#ea54ff"></div>
<div class="a" style="left:1692.8px;top:746.8px;width:22.5px;height:29px;background:#000;border-radius:1.5px"></div>
<div class="a" style="left:1695.6px;top:749.7px;width:17px;height:23px;background:#ff54d4"></div>
<div class="a" style="left:1716.5px;top:746.8px;width:22.5px;height:29px;background:#000;border-radius:1.5px"></div>
<div class="a" style="left:1719.3px;top:749.7px;width:17px;height:23px;background:#ff5494"></div>
<div class="a" style="left:1361.0px;top:776.7px;width:22.5px;height:29px;background:#000;border-radius:1.5px"></div>
<div class="a" style="left:1363.8px;top:779.6px;width:17px;height:23px;background:#ff0000"></div>
<div class="a" style="left:1384.7px;top:776.7px;width:22.5px;height:29px;background:#000;border-radius:1.5px"></div>
<div class="a" style="left:1387.5px;top:779.6px;width:17px;height:23px;background:#ff6000"></div>
<div class="a" style="left:1408.4px;top:776.7px;width:22.5px;height:29px;background:#000;border-radius:1.5px"></div>
<div class="a" style="left:1411.2px;top:779.6px;width:17px;height:23px;background:#ffbf00"></div>
<div class="a" style="left:1432.1px;top:776.7px;width:22.5px;height:29px;background:#000;border-radius:1.5px"></div>
<div class="a" style="left:1434.9px;top:779.6px;width:17px;height:23px;background:#dfff00"></div>
<div class="a" style="left:1455.8px;top:776.7px;width:22.5px;height:29px;background:#000;border-radius:1.5px"></div>
<div class="a" style="left:1458.6px;top:779.6px;width:17px;height:23px;background:#80ff00"></div>
<div class="a" style="left:1479.5px;top:776.7px;width:22.5px;height:29px;background:#000;border-radius:1.5px"></div>
<div class="a" style="left:1482.3px;top:779.6px;width:17px;height:23px;background:#20ff00"></div>
<div class="a" style="left:1503.2px;top:776.7px;width:22.5px;height:29px;background:#000;border-radius:1.5px"></div>
<div class="a" style="left:1506.0px;top:779.6px;width:17px;height:23px;background:#00ff40"></div>
<div class="a" style="left:1526.9px;top:776.7px;width:22.5px;height:29px;background:#000;border-radius:1.5px"></div>
<div class="a" style="left:1529.7px;top:779.6px;width:17px;height:23px;background:#00ff9f"></div>
<div class="a" style="left:1550.6px;top:776.7px;width:22.5px;height:29px;background:#000;border-radius:1.5px"></div>
<div class="a" style="left:1553.4px;top:779.6px;width:17px;height:23px;background:#00ffff"></div>
<div class="a" style="left:1574.3px;top:776.7px;width:22.5px;height:29px;background:#000;border-radius:1.5px"></div>
<div class="a" style="left:1577.1px;top:779.6px;width:17px;height:23px;background:#009fff"></div>
<div class="a" style="left:1598.0px;top:776.7px;width:22.5px;height:29px;background:#000;border-radius:1.5px"></div>
<div class="a" style="left:1600.8px;top:779.6px;width:17px;height:23px;background:#0040ff"></div>
<div class="a" style="left:1621.7px;top:776.7px;width:22.5px;height:29px;background:#000;border-radius:1.5px"></div>
<div class="a" style="left:1624.5px;top:779.6px;width:17px;height:23px;background:#2000ff"></div>
<div class="a" style="left:1645.4px;top:776.7px;width:22.5px;height:29px;background:#000;border-radius:1.5px"></div>
<div class="a" style="left:1648.2px;top:779.6px;width:17px;height:23px;background:#8000ff"></div>
<div class="a" style="left:1669.1px;top:776.7px;width:22.5px;height:29px;background:#000;border-radius:1.5px"></div>
<div class="a" style="left:1671.9px;top:779.6px;width:17px;height:23px;background:#df00ff"></div>
<div class="a" style="left:1692.8px;top:776.7px;width:22.5px;height:29px;background:#000;border-radius:1.5px"></div>
<div class="a" style="left:1695.6px;top:779.6px;width:17px;height:23px;background:#ff00bf"></div>
<div class="a" style="left:1716.5px;top:776.7px;width:22.5px;height:29px;background:#000;border-radius:1.5px"></div>
<div class="a" style="left:1719.3px;top:779.6px;width:17px;height:23px;background:#ff0060"></div>
<div class="a" style="left:1359px;top:818px;width:383px;height:383px;border-radius:50%;background:conic-gradient(from 0deg,#80ff00,#ffff00 30deg,#ff0000 90deg,#ff00ff 150deg,#0000ff 210deg,#00ffff 270deg,#00ff00 330deg,#80ff00 360deg);"></div>
<div class="a" style="left:1359px;top:818px;width:383px;height:383px;border-radius:50%;background:rgba(0,0,0,0.32);"></div>
<div class="a" style="left:1377px;top:836px;width:347px;height:347px;border-radius:50%;background:conic-gradient(from 0deg,#80ff00,#ffff00 30deg,#ff0000 90deg,#ff00ff 150deg,#0000ff 210deg,#00ffff 270deg,#00ff00 330deg,#80ff00 360deg);"></div>
<div class="a" style="left:1377px;top:836px;width:347px;height:347px;border-radius:50%;background:radial-gradient(circle closest-side,#fff 0%,rgba(255,255,255,0.92) 10%,rgba(255,255,255,0.72) 30%,rgba(255,255,255,0.52) 50%,rgba(255,255,255,0.3) 75%,rgba(255,255,255,0.1) 100%);"></div>
<svg class="a" style="left:1543px;top:1003px" width="16" height="16"><path d="M8 1 V15 M1 8 H15" stroke="#000" stroke-width="2"/></svg>
<svg class="a" style="left:1665px;top:1108px" width="50" height="50"><polygon points="18.4,17.7 40.7,20.5 24,38.9" fill="#fff" stroke="#000" stroke-width="1.6" stroke-linejoin="miter"/><circle cx="12.6" cy="12.7" r="7.9" fill="#fff" stroke="#000" stroke-width="1.6"/></svg>
<div class="a" style="left:1430px;top:1240px;width:149px;height:45px;background:#161616;border-radius:5px"></div>
<div class="a" style="left:1431.5px;top:1241.5px;width:146px;height:42px;background:linear-gradient(#4e4e4e,#444);border-radius:4px"></div>
<div class="a" style="left:1487.5px;top:1251.5px;color:#dcdcdc;font-size:22px;letter-spacing:1.4px;-webkit-text-stroke:0.3px #dcdcdc;text-shadow:1px 1px 1px #000;white-space:nowrap">OK</div>
<div class="a" style="left:1600px;top:1240px;width:148px;height:45px;background:#161616;border-radius:5px"></div>
<div class="a" style="left:1601.5px;top:1241.5px;width:145px;height:42px;background:linear-gradient(#4e4e4e,#444);border-radius:4px"></div>
<div class="a" style="left:1636px;top:1251.5px;color:#dcdcdc;font-size:22px;letter-spacing:1.4px;-webkit-text-stroke:0.3px #dcdcdc;text-shadow:1px 1px 1px #000;white-space:nowrap">Cancel</div>
<!--/GETCOLOR-->

<!--COLORPANEL-->
<div class="a" style="left:1806px;top:88px;width:722px;height:1300px;border-radius:11px;background:#333;box-shadow:0 0 0 1px rgba(0,0,0,0.3),0 26px 56px rgba(0,0,0,0.5),0 0 14px rgba(0,0,0,0.18)"></div>
<div class="a" style="left:1806px;top:88px;width:722px;height:44px;border-radius:11px 11px 0 0;background:#f6f6f6;box-shadow:inset 0 -1px 0 #d8d8d8"></div>
<div class="a" style="left:1822px;top:98px;width:22px;height:22px;border-radius:50%;background:#dcdcdc;border:1px solid #c6c6c6"></div>
<div class="a" style="left:1862px;top:98px;width:22px;height:22px;border-radius:50%;background:#dcdcdc;border:1px solid #c6c6c6"></div>
<div class="a" style="left:1902px;top:98px;width:22px;height:22px;border-radius:50%;background:#dcdcdc;border:1px solid #c6c6c6"></div>
<div class="a" style="left:2099.5px;top:97.5px;font-size:25px;color:#ababab;letter-spacing:0.95px;white-space:nowrap;-webkit-text-stroke:0.2px #ababab">ColorPanel</div>
<div class="a" style="left:1828px;top:165px;width:677px;height:206px;border:2px solid #181818;box-sizing:border-box"></div>
<div class="a" style="left:1840px;top:150px;width:214px;height:30px;background:#333"></div>
<div class="a" style="left:1844px;top:154px;color:#d8d8d8;font-size:23px;text-shadow:1px 1px 1px #000;white-space:nowrap;letter-spacing:1.25px;-webkit-text-stroke:0.35px #d8d8d8;letter-spacing:1.1px">Nuke Color Nodes</div>
<div class="a" style="left:1828px;top:405px;width:677px;height:687px;border:2px solid #181818;box-sizing:border-box"></div>
<div class="a" style="left:1840px;top:390px;width:156px;height:30px;background:#333"></div>
<div class="a" style="left:1845.5px;top:394.5px;color:#d8d8d8;font-size:23px;text-shadow:1px 1px 1px #000;white-space:nowrap;letter-spacing:1.25px;-webkit-text-stroke:0.35px #d8d8d8;">Other Colors</div>
<div class="a" style="left:1847px;top:218.5px;width:87px;height:45px;background:rgba(20,14,12,0.75);border-radius:4px"></div>
<div class="a" style="left:1848px;top:220px;width:85px;height:42px;background:linear-gradient(rgba(255,255,255,0.10),rgba(255,255,255,0.02) 10%,rgba(0,0,0,0.0) 40%,rgba(0,0,0,0.09)),#bb7848;border-radius:3px"></div>
<div class="a" style="left:1955px;top:218.5px;width:85px;height:45px;background:rgba(20,14,12,0.75);border-radius:4px"></div>
<div class="a" style="left:1956px;top:220px;width:83px;height:42px;background:linear-gradient(rgba(255,255,255,0.10),rgba(255,255,255,0.02) 10%,rgba(0,0,0,0.0) 40%,rgba(0,0,0,0.09)),#9bb2e2;border-radius:3px"></div>
<div class="a" style="left:2061px;top:218.5px;width:87px;height:45px;background:rgba(20,14,12,0.75);border-radius:4px"></div>
<div class="a" style="left:2062px;top:220px;width:85px;height:42px;background:linear-gradient(rgba(255,255,255,0.10),rgba(255,255,255,0.02) 10%,rgba(0,0,0,0.0) 40%,rgba(0,0,0,0.09)),#4856b8;border-radius:3px"></div>
<div class="a" style="left:2169px;top:218.5px;width:84px;height:45px;background:rgba(20,14,12,0.75);border-radius:4px"></div>
<div class="a" style="left:2170px;top:220px;width:82px;height:42px;background:linear-gradient(rgba(255,255,255,0.10),rgba(255,255,255,0.02) 10%,rgba(0,0,0,0.0) 40%,rgba(0,0,0,0.09)),#976d9b;border-radius:3px"></div>
<div class="a" style="left:2275px;top:218.5px;width:87px;height:45px;background:rgba(20,14,12,0.75);border-radius:4px"></div>
<div class="a" style="left:2276px;top:220px;width:85px;height:42px;background:linear-gradient(rgba(255,255,255,0.10),rgba(255,255,255,0.02) 10%,rgba(0,0,0,0.0) 40%,rgba(0,0,0,0.09)),#c8b86c;border-radius:3px"></div>
<div class="a" style="left:2383px;top:218.5px;width:85px;height:45px;background:rgba(20,14,12,0.75);border-radius:4px"></div>
<div class="a" style="left:2384px;top:220px;width:83px;height:42px;background:linear-gradient(rgba(255,255,255,0.10),rgba(255,255,255,0.02) 10%,rgba(0,0,0,0.0) 40%,rgba(0,0,0,0.09)),#a8406c;border-radius:3px"></div>
<div class="a" style="left:1847px;top:298.5px;width:87px;height:45px;background:rgba(20,14,12,0.75);border-radius:4px"></div>
<div class="a" style="left:1848px;top:300px;width:85px;height:42px;background:linear-gradient(rgba(255,255,255,0.10),rgba(255,255,255,0.02) 10%,rgba(0,0,0,0.0) 40%,rgba(0,0,0,0.09)),#84e084;border-radius:3px"></div>
<div class="a" style="left:1955px;top:298.5px;width:85px;height:45px;background:rgba(20,14,12,0.75);border-radius:4px"></div>
<div class="a" style="left:1956px;top:300px;width:83px;height:42px;background:linear-gradient(rgba(255,255,255,0.10),rgba(255,255,255,0.02) 10%,rgba(0,0,0,0.0) 40%,rgba(0,0,0,0.09)),#009e00;border-radius:3px"></div>
<div class="a" style="left:2061px;top:298.5px;width:87px;height:45px;background:rgba(20,14,12,0.75);border-radius:4px"></div>
<div class="a" style="left:2062px;top:300px;width:85px;height:42px;background:linear-gradient(rgba(255,255,255,0.10),rgba(255,255,255,0.02) 10%,rgba(0,0,0,0.0) 40%,rgba(0,0,0,0.09)),#000070;border-radius:3px"></div>
<div class="a" style="left:2169px;top:298.5px;width:84px;height:45px;background:rgba(20,14,12,0.75);border-radius:4px"></div>
<div class="a" style="left:2170px;top:300px;width:82px;height:42px;background:linear-gradient(rgba(255,255,255,0.10),rgba(255,255,255,0.02) 10%,rgba(0,0,0,0.0) 40%,rgba(0,0,0,0.09)),#e2e2e2;border-radius:3px"></div>
<div class="a" style="left:2275px;top:298.5px;width:87px;height:45px;background:rgba(20,14,12,0.75);border-radius:4px"></div>
<div class="a" style="left:2276px;top:300px;width:85px;height:42px;background:linear-gradient(rgba(255,255,255,0.10),rgba(255,255,255,0.02) 10%,rgba(0,0,0,0.0) 40%,rgba(0,0,0,0.09)),#ac0000;border-radius:3px"></div>
<div class="a" style="left:2383px;top:298.5px;width:85px;height:45px;background:rgba(20,14,12,0.75);border-radius:4px"></div>
<div class="a" style="left:2384px;top:300px;width:83px;height:42px;background:linear-gradient(rgba(255,255,255,0.10),rgba(255,255,255,0.02) 10%,rgba(0,0,0,0.0) 40%,rgba(0,0,0,0.09)),#e0e000;border-radius:3px"></div>
<div class="a" style="left:1847px;top:458.5px;width:87px;height:45px;background:rgba(20,14,12,0.75);border-radius:4px"></div>
<div class="a" style="left:1848px;top:460px;width:85px;height:42px;background:linear-gradient(rgba(255,255,255,0.10),rgba(255,255,255,0.02) 10%,rgba(0,0,0,0.0) 40%,rgba(0,0,0,0.09)),#800000;border-radius:3px"></div>
<div class="a" style="left:1955px;top:458.5px;width:85px;height:45px;background:rgba(20,14,12,0.75);border-radius:4px"></div>
<div class="a" style="left:1956px;top:460px;width:83px;height:42px;background:linear-gradient(rgba(255,255,255,0.10),rgba(255,255,255,0.02) 10%,rgba(0,0,0,0.0) 40%,rgba(0,0,0,0.09)),#f80808;border-radius:3px"></div>
<div class="a" style="left:2061px;top:458.5px;width:87px;height:45px;background:rgba(20,14,12,0.75);border-radius:4px"></div>
<div class="a" style="left:2062px;top:460px;width:85px;height:42px;background:linear-gradient(rgba(255,255,255,0.10),rgba(255,255,255,0.02) 10%,rgba(0,0,0,0.0) 40%,rgba(0,0,0,0.09)),#f85808;border-radius:3px"></div>
<div class="a" style="left:2169px;top:458.5px;width:84px;height:45px;background:rgba(20,14,12,0.75);border-radius:4px"></div>
<div class="a" style="left:2170px;top:460px;width:82px;height:42px;background:linear-gradient(rgba(255,255,255,0.10),rgba(255,255,255,0.02) 10%,rgba(0,0,0,0.0) 40%,rgba(0,0,0,0.09)),#f89808;border-radius:3px"></div>
<div class="a" style="left:2275px;top:458.5px;width:87px;height:45px;background:rgba(20,14,12,0.75);border-radius:4px"></div>
<div class="a" style="left:2276px;top:460px;width:85px;height:42px;background:linear-gradient(rgba(255,255,255,0.10),rgba(255,255,255,0.02) 10%,rgba(0,0,0,0.0) 40%,rgba(0,0,0,0.09)),#f8c408;border-radius:3px"></div>
<div class="a" style="left:2383px;top:458.5px;width:85px;height:45px;background:rgba(20,14,12,0.75);border-radius:4px"></div>
<div class="a" style="left:2384px;top:460px;width:83px;height:42px;background:linear-gradient(rgba(255,255,255,0.10),rgba(255,255,255,0.02) 10%,rgba(0,0,0,0.0) 40%,rgba(0,0,0,0.09)),#f8f808;border-radius:3px"></div>
<div class="a" style="left:1847px;top:538.5px;width:87px;height:45px;background:rgba(20,14,12,0.75);border-radius:4px"></div>
<div class="a" style="left:1848px;top:540px;width:85px;height:42px;background:linear-gradient(rgba(255,255,255,0.10),rgba(255,255,255,0.02) 10%,rgba(0,0,0,0.0) 40%,rgba(0,0,0,0.09)),#500070;border-radius:3px"></div>
<div class="a" style="left:1955px;top:538.5px;width:85px;height:45px;background:rgba(20,14,12,0.75);border-radius:4px"></div>
<div class="a" style="left:1956px;top:540px;width:83px;height:42px;background:linear-gradient(rgba(255,255,255,0.10),rgba(255,255,255,0.02) 10%,rgba(0,0,0,0.0) 40%,rgba(0,0,0,0.09)),#9008f8;border-radius:3px"></div>
<div class="a" style="left:2061px;top:538.5px;width:87px;height:45px;background:rgba(20,14,12,0.75);border-radius:4px"></div>
<div class="a" style="left:2062px;top:540px;width:85px;height:42px;background:linear-gradient(rgba(255,255,255,0.10),rgba(255,255,255,0.02) 10%,rgba(0,0,0,0.0) 40%,rgba(0,0,0,0.09)),#c008f8;border-radius:3px"></div>
<div class="a" style="left:2169px;top:538.5px;width:84px;height:45px;background:rgba(20,14,12,0.75);border-radius:4px"></div>
<div class="a" style="left:2170px;top:540px;width:82px;height:42px;background:linear-gradient(rgba(255,255,255,0.10),rgba(255,255,255,0.02) 10%,rgba(0,0,0,0.0) 40%,rgba(0,0,0,0.09)),#d008c0;border-radius:3px"></div>
<div class="a" style="left:2275px;top:538.5px;width:87px;height:45px;background:rgba(20,14,12,0.75);border-radius:4px"></div>
<div class="a" style="left:2276px;top:540px;width:85px;height:42px;background:linear-gradient(rgba(255,255,255,0.10),rgba(255,255,255,0.02) 10%,rgba(0,0,0,0.0) 40%,rgba(0,0,0,0.09)),#f855f8;border-radius:3px"></div>
<div class="a" style="left:2383px;top:538.5px;width:85px;height:45px;background:rgba(20,14,12,0.75);border-radius:4px"></div>
<div class="a" style="left:2384px;top:540px;width:83px;height:42px;background:linear-gradient(rgba(255,255,255,0.10),rgba(255,255,255,0.02) 10%,rgba(0,0,0,0.0) 40%,rgba(0,0,0,0.09)),#f4b8f4;border-radius:3px"></div>
<div class="a" style="left:1847px;top:618.5px;width:87px;height:45px;background:rgba(20,14,12,0.75);border-radius:4px"></div>
<div class="a" style="left:1848px;top:620px;width:85px;height:42px;background:linear-gradient(rgba(255,255,255,0.10),rgba(255,255,255,0.02) 10%,rgba(0,0,0,0.0) 40%,rgba(0,0,0,0.09)),#001468;border-radius:3px"></div>
<div class="a" style="left:1955px;top:618.5px;width:85px;height:45px;background:rgba(20,14,12,0.75);border-radius:4px"></div>
<div class="a" style="left:1956px;top:620px;width:83px;height:42px;background:linear-gradient(rgba(255,255,255,0.10),rgba(255,255,255,0.02) 10%,rgba(0,0,0,0.0) 40%,rgba(0,0,0,0.09)),#0808f8;border-radius:3px"></div>
<div class="a" style="left:2061px;top:618.5px;width:87px;height:45px;background:rgba(20,14,12,0.75);border-radius:4px"></div>
<div class="a" style="left:2062px;top:620px;width:85px;height:42px;background:linear-gradient(rgba(255,255,255,0.10),rgba(255,255,255,0.02) 10%,rgba(0,0,0,0.0) 40%,rgba(0,0,0,0.09)),#0874f8;border-radius:3px"></div>
<div class="a" style="left:2169px;top:618.5px;width:84px;height:45px;background:rgba(20,14,12,0.75);border-radius:4px"></div>
<div class="a" style="left:2170px;top:620px;width:82px;height:42px;background:linear-gradient(rgba(255,255,255,0.10),rgba(255,255,255,0.02) 10%,rgba(0,0,0,0.0) 40%,rgba(0,0,0,0.09)),#08a8f8;border-radius:3px"></div>
<div class="a" style="left:2275px;top:618.5px;width:87px;height:45px;background:rgba(20,14,12,0.75);border-radius:4px"></div>
<div class="a" style="left:2276px;top:620px;width:85px;height:42px;background:linear-gradient(rgba(255,255,255,0.10),rgba(255,255,255,0.02) 10%,rgba(0,0,0,0.0) 40%,rgba(0,0,0,0.09)),#74baf8;border-radius:3px"></div>
<div class="a" style="left:2383px;top:618.5px;width:85px;height:45px;background:rgba(20,14,12,0.75);border-radius:4px"></div>
<div class="a" style="left:2384px;top:620px;width:83px;height:42px;background:linear-gradient(rgba(255,255,255,0.10),rgba(255,255,255,0.02) 10%,rgba(0,0,0,0.0) 40%,rgba(0,0,0,0.09)),#bcd4f8;border-radius:3px"></div>
<div class="a" style="left:1847px;top:698.5px;width:87px;height:45px;background:rgba(20,14,12,0.75);border-radius:4px"></div>
<div class="a" style="left:1848px;top:700px;width:85px;height:42px;background:linear-gradient(rgba(255,255,255,0.10),rgba(255,255,255,0.02) 10%,rgba(0,0,0,0.0) 40%,rgba(0,0,0,0.09)),#1c506c;border-radius:3px"></div>
<div class="a" style="left:1955px;top:698.5px;width:85px;height:45px;background:rgba(20,14,12,0.75);border-radius:4px"></div>
<div class="a" style="left:1956px;top:700px;width:83px;height:42px;background:linear-gradient(rgba(255,255,255,0.10),rgba(255,255,255,0.02) 10%,rgba(0,0,0,0.0) 40%,rgba(0,0,0,0.09)),#38949c;border-radius:3px"></div>
<div class="a" style="left:2061px;top:698.5px;width:87px;height:45px;background:rgba(20,14,12,0.75);border-radius:4px"></div>
<div class="a" style="left:2062px;top:700px;width:85px;height:42px;background:linear-gradient(rgba(255,255,255,0.10),rgba(255,255,255,0.02) 10%,rgba(0,0,0,0.0) 40%,rgba(0,0,0,0.09)),#4ccab8;border-radius:3px"></div>
<div class="a" style="left:2169px;top:698.5px;width:84px;height:45px;background:rgba(20,14,12,0.75);border-radius:4px"></div>
<div class="a" style="left:2170px;top:700px;width:82px;height:42px;background:linear-gradient(rgba(255,255,255,0.10),rgba(255,255,255,0.02) 10%,rgba(0,0,0,0.0) 40%,rgba(0,0,0,0.09)),#10f4d8;border-radius:3px"></div>
<div class="a" style="left:2275px;top:698.5px;width:87px;height:45px;background:rgba(20,14,12,0.75);border-radius:4px"></div>
<div class="a" style="left:2276px;top:700px;width:85px;height:42px;background:linear-gradient(rgba(255,255,255,0.10),rgba(255,255,255,0.02) 10%,rgba(0,0,0,0.0) 40%,rgba(0,0,0,0.09)),#7cf8d8;border-radius:3px"></div>
<div class="a" style="left:2383px;top:698.5px;width:85px;height:45px;background:rgba(20,14,12,0.75);border-radius:4px"></div>
<div class="a" style="left:2384px;top:700px;width:83px;height:42px;background:linear-gradient(rgba(255,255,255,0.10),rgba(255,255,255,0.02) 10%,rgba(0,0,0,0.0) 40%,rgba(0,0,0,0.09)),#b4f8dc;border-radius:3px"></div>
<div class="a" style="left:1847px;top:778.5px;width:87px;height:45px;background:rgba(20,14,12,0.75);border-radius:4px"></div>
<div class="a" style="left:1848px;top:780px;width:85px;height:42px;background:linear-gradient(rgba(255,255,255,0.10),rgba(255,255,255,0.02) 10%,rgba(0,0,0,0.0) 40%,rgba(0,0,0,0.09)),#003000;border-radius:3px"></div>
<div class="a" style="left:1955px;top:778.5px;width:85px;height:45px;background:rgba(20,14,12,0.75);border-radius:4px"></div>
<div class="a" style="left:1956px;top:780px;width:83px;height:42px;background:linear-gradient(rgba(255,255,255,0.10),rgba(255,255,255,0.02) 10%,rgba(0,0,0,0.0) 40%,rgba(0,0,0,0.09)),#508048;border-radius:3px"></div>
<div class="a" style="left:2061px;top:778.5px;width:87px;height:45px;background:rgba(20,14,12,0.75);border-radius:4px"></div>
<div class="a" style="left:2062px;top:780px;width:85px;height:42px;background:linear-gradient(rgba(255,255,255,0.10),rgba(255,255,255,0.02) 10%,rgba(0,0,0,0.0) 40%,rgba(0,0,0,0.09)),#54aa00;border-radius:3px"></div>
<div class="a" style="left:2169px;top:778.5px;width:84px;height:45px;background:rgba(20,14,12,0.75);border-radius:4px"></div>
<div class="a" style="left:2170px;top:780px;width:82px;height:42px;background:linear-gradient(rgba(255,255,255,0.10),rgba(255,255,255,0.02) 10%,rgba(0,0,0,0.0) 40%,rgba(0,0,0,0.09)),#00f410;border-radius:3px"></div>
<div class="a" style="left:2275px;top:778.5px;width:87px;height:45px;background:rgba(20,14,12,0.75);border-radius:4px"></div>
<div class="a" style="left:2276px;top:780px;width:85px;height:42px;background:linear-gradient(rgba(255,255,255,0.10),rgba(255,255,255,0.02) 10%,rgba(0,0,0,0.0) 40%,rgba(0,0,0,0.09)),#6cd400;border-radius:3px"></div>
<div class="a" style="left:2383px;top:778.5px;width:85px;height:45px;background:rgba(20,14,12,0.75);border-radius:4px"></div>
<div class="a" style="left:2384px;top:780px;width:83px;height:42px;background:linear-gradient(rgba(255,255,255,0.10),rgba(255,255,255,0.02) 10%,rgba(0,0,0,0.0) 40%,rgba(0,0,0,0.09)),#84f410;border-radius:3px"></div>
<div class="a" style="left:1847px;top:858.5px;width:87px;height:45px;background:rgba(20,14,12,0.75);border-radius:4px"></div>
<div class="a" style="left:1848px;top:860px;width:85px;height:42px;background:linear-gradient(rgba(255,255,255,0.10),rgba(255,255,255,0.02) 10%,rgba(0,0,0,0.0) 40%,rgba(0,0,0,0.09)),#606c24;border-radius:3px"></div>
<div class="a" style="left:1955px;top:858.5px;width:85px;height:45px;background:rgba(20,14,12,0.75);border-radius:4px"></div>
<div class="a" style="left:1956px;top:860px;width:83px;height:42px;background:linear-gradient(rgba(255,255,255,0.10),rgba(255,255,255,0.02) 10%,rgba(0,0,0,0.0) 40%,rgba(0,0,0,0.09)),#a2b458;border-radius:3px"></div>
<div class="a" style="left:2061px;top:858.5px;width:87px;height:45px;background:rgba(20,14,12,0.75);border-radius:4px"></div>
<div class="a" style="left:2062px;top:860px;width:85px;height:42px;background:linear-gradient(rgba(255,255,255,0.10),rgba(255,255,255,0.02) 10%,rgba(0,0,0,0.0) 40%,rgba(0,0,0,0.09)),#6eaa56;border-radius:3px"></div>
<div class="a" style="left:2169px;top:858.5px;width:84px;height:45px;background:rgba(20,14,12,0.75);border-radius:4px"></div>
<div class="a" style="left:2170px;top:860px;width:82px;height:42px;background:linear-gradient(rgba(255,255,255,0.10),rgba(255,255,255,0.02) 10%,rgba(0,0,0,0.0) 40%,rgba(0,0,0,0.09)),#a8d400;border-radius:3px"></div>
<div class="a" style="left:2275px;top:858.5px;width:87px;height:45px;background:rgba(20,14,12,0.75);border-radius:4px"></div>
<div class="a" style="left:2276px;top:860px;width:85px;height:42px;background:linear-gradient(rgba(255,255,255,0.10),rgba(255,255,255,0.02) 10%,rgba(0,0,0,0.0) 40%,rgba(0,0,0,0.09)),#aad870;border-radius:3px"></div>
<div class="a" style="left:2383px;top:858.5px;width:85px;height:45px;background:rgba(20,14,12,0.75);border-radius:4px"></div>
<div class="a" style="left:2384px;top:860px;width:83px;height:42px;background:linear-gradient(rgba(255,255,255,0.10),rgba(255,255,255,0.02) 10%,rgba(0,0,0,0.0) 40%,rgba(0,0,0,0.09)),#bcf430;border-radius:3px"></div>
<div class="a" style="left:1847px;top:938.5px;width:87px;height:45px;background:rgba(20,14,12,0.75);border-radius:4px"></div>
<div class="a" style="left:1848px;top:940px;width:85px;height:42px;background:linear-gradient(rgba(255,255,255,0.10),rgba(255,255,255,0.02) 10%,rgba(0,0,0,0.0) 40%,rgba(0,0,0,0.09)),#503600;border-radius:3px"></div>
<div class="a" style="left:1955px;top:938.5px;width:85px;height:45px;background:rgba(20,14,12,0.75);border-radius:4px"></div>
<div class="a" style="left:1956px;top:940px;width:83px;height:42px;background:linear-gradient(rgba(255,255,255,0.10),rgba(255,255,255,0.02) 10%,rgba(0,0,0,0.0) 40%,rgba(0,0,0,0.09)),#7c4010;border-radius:3px"></div>
<div class="a" style="left:2061px;top:938.5px;width:87px;height:45px;background:rgba(20,14,12,0.75);border-radius:4px"></div>
<div class="a" style="left:2062px;top:940px;width:85px;height:42px;background:linear-gradient(rgba(255,255,255,0.10),rgba(255,255,255,0.02) 10%,rgba(0,0,0,0.0) 40%,rgba(0,0,0,0.09)),#b46810;border-radius:3px"></div>
<div class="a" style="left:2169px;top:938.5px;width:84px;height:45px;background:rgba(20,14,12,0.75);border-radius:4px"></div>
<div class="a" style="left:2170px;top:940px;width:82px;height:42px;background:linear-gradient(rgba(255,255,255,0.10),rgba(255,255,255,0.02) 10%,rgba(0,0,0,0.0) 40%,rgba(0,0,0,0.09)),#986c30;border-radius:3px"></div>
<div class="a" style="left:2275px;top:938.5px;width:87px;height:45px;background:rgba(20,14,12,0.75);border-radius:4px"></div>
<div class="a" style="left:2276px;top:940px;width:85px;height:42px;background:linear-gradient(rgba(255,255,255,0.10),rgba(255,255,255,0.02) 10%,rgba(0,0,0,0.0) 40%,rgba(0,0,0,0.09)),#bc9430;border-radius:3px"></div>
<div class="a" style="left:2383px;top:938.5px;width:85px;height:45px;background:rgba(20,14,12,0.75);border-radius:4px"></div>
<div class="a" style="left:2384px;top:940px;width:83px;height:42px;background:linear-gradient(rgba(255,255,255,0.10),rgba(255,255,255,0.02) 10%,rgba(0,0,0,0.0) 40%,rgba(0,0,0,0.09)),#e4bc00;border-radius:3px"></div>
<div class="a" style="left:1847px;top:1018.5px;width:87px;height:45px;background:rgba(20,14,12,0.75);border-radius:4px"></div>
<div class="a" style="left:1848px;top:1020px;width:85px;height:42px;background:linear-gradient(rgba(255,255,255,0.10),rgba(255,255,255,0.02) 10%,rgba(0,0,0,0.0) 40%,rgba(0,0,0,0.09)),#000000;border-radius:3px"></div>
<div class="a" style="left:1955px;top:1018.5px;width:85px;height:45px;background:rgba(20,14,12,0.75);border-radius:4px"></div>
<div class="a" style="left:1956px;top:1020px;width:83px;height:42px;background:linear-gradient(rgba(255,255,255,0.10),rgba(255,255,255,0.02) 10%,rgba(0,0,0,0.0) 40%,rgba(0,0,0,0.09)),#2e2e2e;border-radius:3px"></div>
<div class="a" style="left:2061px;top:1018.5px;width:87px;height:45px;background:rgba(20,14,12,0.75);border-radius:4px"></div>
<div class="a" style="left:2062px;top:1020px;width:85px;height:42px;background:linear-gradient(rgba(255,255,255,0.10),rgba(255,255,255,0.02) 10%,rgba(0,0,0,0.0) 40%,rgba(0,0,0,0.09)),#646464;border-radius:3px"></div>
<div class="a" style="left:2169px;top:1018.5px;width:84px;height:45px;background:rgba(20,14,12,0.75);border-radius:4px"></div>
<div class="a" style="left:2170px;top:1020px;width:82px;height:42px;background:linear-gradient(rgba(255,255,255,0.10),rgba(255,255,255,0.02) 10%,rgba(0,0,0,0.0) 40%,rgba(0,0,0,0.09)),#949494;border-radius:3px"></div>
<div class="a" style="left:2275px;top:1018.5px;width:87px;height:45px;background:rgba(20,14,12,0.75);border-radius:4px"></div>
<div class="a" style="left:2276px;top:1020px;width:85px;height:42px;background:linear-gradient(rgba(255,255,255,0.10),rgba(255,255,255,0.02) 10%,rgba(0,0,0,0.0) 40%,rgba(0,0,0,0.09)),#c4c4c4;border-radius:3px"></div>
<div class="a" style="left:2383px;top:1018.5px;width:85px;height:45px;background:rgba(20,14,12,0.75);border-radius:4px"></div>
<div class="a" style="left:2384px;top:1020px;width:83px;height:42px;background:linear-gradient(rgba(255,255,255,0.10),rgba(255,255,255,0.02) 10%,rgba(0,0,0,0.0) 40%,rgba(0,0,0,0.09)),#f4f4f4;border-radius:3px"></div>
<div class="a" style="left:1847px;top:1173px;width:621px;height:52px;background:#1a1a1a;border-radius:5px"></div>
<div class="a" style="left:1848.5px;top:1174.5px;width:618px;height:49px;background:linear-gradient(#4e4e4e,#454545);border-radius:4px"></div>
<div class="a" style="left:2078px;top:1187.5px;color:#d8d8d8;font-size:23px;text-shadow:1px 1px 1px #000;white-space:nowrap;letter-spacing:1.25px;-webkit-text-stroke:0.35px #d8d8d8;">Custom Color</div>
<div class="a" style="left:1847px;top:1320px;width:25px;height:25px;background:#1c1c1c;border-radius:2px"></div>
<div class="a" style="left:1849px;top:1322px;width:21px;height:21px;background:#3a3a3a"></div>
<div class="a" style="left:1880.5px;top:1321.5px;color:#d8d8d8;font-size:23px;text-shadow:1px 1px 1px #000;white-space:nowrap;letter-spacing:1.25px;-webkit-text-stroke:0.35px #d8d8d8;">Close Window when select color</div>
<!--/COLORPANEL-->

</body></html>
